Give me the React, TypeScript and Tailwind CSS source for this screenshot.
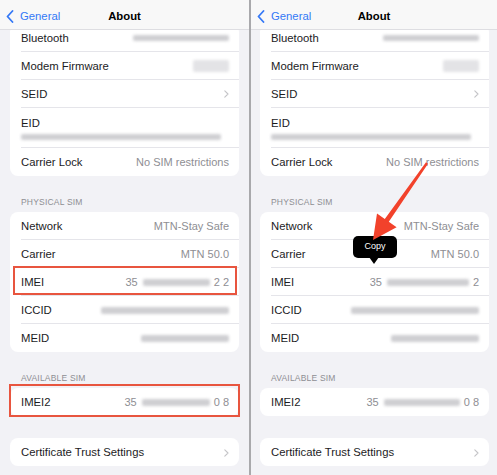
import React from "react";

const Blur = ({ w, h = 6, c = "#cfcfd2" }: { w: number; h?: number; c?: string }) => (
  <span
    className="inline-block rounded-[2px] blur-[1.5px]"
    style={{ width: w, height: h, backgroundColor: c }}
  />
);

const Chevron = () => (
  <svg width="5" height="8" viewBox="0 0 5 8" className="shrink-0">
    <path d="M0.8 0.8 L4 4 L0.8 7.2" fill="none" stroke="#c4c4c7" strokeWidth="1.1" strokeLinecap="round" strokeLinejoin="round" />
  </svg>
);

type RowProps = {
  label: string;
  value?: React.ReactNode;
  last?: boolean;
  overlay?: React.ReactNode;
};

const Row = ({ label, value, last, overlay }: RowProps) => (
  <div className="relative pl-[11px]">
    <div
      className={
        "flex h-[28px] items-center justify-between pr-[10px] pt-[1px] " +
        (last ? "" : "border-b border-[#e5e5ea]")
      }
    >
      <span className="text-[11.3px] text-[#1c1c1e]">{label}</span>
      <span className="flex items-center gap-[3px] text-[11px] text-[#8e8e93]">{value}</span>
    </div>
    {overlay}
  </div>
);

const EidRow = ({ w }: { w: number }) => (
  <div className="pl-[11px]">
    <div className="flex h-[40px] flex-col justify-center border-b border-[#e5e5ea] pr-[10px] pt-[1px]">
      <span className="text-[11.3px] leading-[14px] text-[#1c1c1e]">EID</span>
      <span className="mt-[3px] flex h-[8px] items-center">
        <Blur w={w} h={6} />
      </span>
    </div>
  </div>
);

const SectionLabel = ({ text }: { text: string }) => (
  <div className="mb-[5px] mt-[21px] h-[10px] pl-[11px] text-[8.5px] uppercase leading-[10px] tracking-[0.2px] text-[#8e8e93]">
    {text}
  </div>
);

const Header = () => (
  <div className="relative z-10 flex h-[30px] shrink-0 items-center border-b border-[#dedee2] bg-[#f8f8f8] pt-[3px]">
    <div className="flex w-1/3 items-center pl-[6px] text-[11.3px] text-[#3478f6]">
      <svg width="8" height="13" viewBox="0 0 8 13" className="mr-[6px]">
        <path d="M6.5 1 L1.5 6.5 L6.5 12" fill="none" stroke="#3478f6" strokeWidth="1.8" strokeLinecap="round" strokeLinejoin="round" />
      </svg>
      General
    </div>
    <div className="w-1/3 text-center text-[11.3px] font-bold text-[#000]">About</div>
    <div className="w-1/3" />
  </div>
);

const ImeiValue = ({ tail, blurW }: { tail: string; blurW: number }) => (
  <>
    <span>35</span>
    <span className="ml-[2px]">
      <Blur w={blurW} h={7} />
    </span>
    <span className="ml-[1px]">{tail}</span>
  </>
);

type PanelProps = { left: boolean };

const Panel = ({ left }: PanelProps) => {
  const red = "border-2 border-[#e8553f]";
  return (
    <div className={"relative flex h-[475px] flex-col overflow-hidden bg-[#f2f2f6] " + (left ? "w-[249px]" : "w-[246px]")}>
      <Header />
      <div className={"flex flex-col " + (left ? "px-[10px]" : "pl-[9px] pr-[8px]")}>
        <div className="-mt-[6px] overflow-hidden rounded-[8px] bg-white">
          <Row label="Bluetooth" value={<Blur w={96} h={6} />} />
          <Row label="Modem Firmware" value={<Blur w={36} h={12} c="#e3e3e6" />} />
          <Row label="SEID" value={<Chevron />} />
          <EidRow w={200} />
          <Row label="Carrier Lock" value="No SIM restrictions" last />
        </div>

        <SectionLabel text="Physical SIM" />
        <div className="rounded-[8px] bg-white">
          <Row label="Network" value="MTN-Stay Safe" />
          <Row label="Carrier" value="MTN 50.0" />
          <Row
            label="IMEI"
            value={<ImeiValue tail={left ? "2 2" : "2"} blurW={left ? 67 : 82} />}
            overlay={left ? <div className={"pointer-events-none absolute -top-[2px] left-[3px] right-[2px] h-[29px] " + red} /> : null}
          />
          <Row label="ICCID" value={<Blur w={128} h={7} />} />
          <Row label="MEID" value={<Blur w={88} h={7} />} last />
        </div>

        <SectionLabel text="Available SIM" />
        <div className="relative rounded-[8px] bg-white">
          <Row label="IMEI2" value={<ImeiValue tail="0 8" blurW={left ? 68 : 76} />} last />
          {left ? <div className={"pointer-events-none absolute -bottom-[1px] -left-[1px] -right-[1px] -top-[4px] " + red} /> : null}
        </div>

        <div className="mt-[22px] rounded-[8px] bg-white">
          <Row label="Certificate Trust Settings" value={<Chevron />} last />
        </div>
      </div>

      {!left && (
        <>
          <div className="absolute left-[102px] top-[236px] flex h-[22px] w-[44px] items-center justify-center rounded-[5px] bg-black text-[9px] text-white">
            Copy
          </div>
          <svg className="pointer-events-none absolute left-0 top-0" width="246" height="475" viewBox="0 0 246 475">
            <polygon points="123,264 118,257 128,257" fill="#000" />
            <polygon
              points="177,163.7 137.8,221.7 145.6,227.2 122,240 126,213.4 133.8,218.9 175,162.3"
              fill="#f2422b"
            />
          </svg>
        </>
      )}
    </div>
  );
};

export default function App() {
  return (
    <div
      className="flex h-[475px] w-[497px] overflow-hidden bg-[#f2f2f6]"
      style={{ fontFamily: '"Liberation Sans", Arial, sans-serif' }}
    >
      <Panel left />
      <div className="h-full w-[2px] shrink-0 bg-[#a9a9ac]" />
      <Panel left={false} />
    </div>
  );
}
